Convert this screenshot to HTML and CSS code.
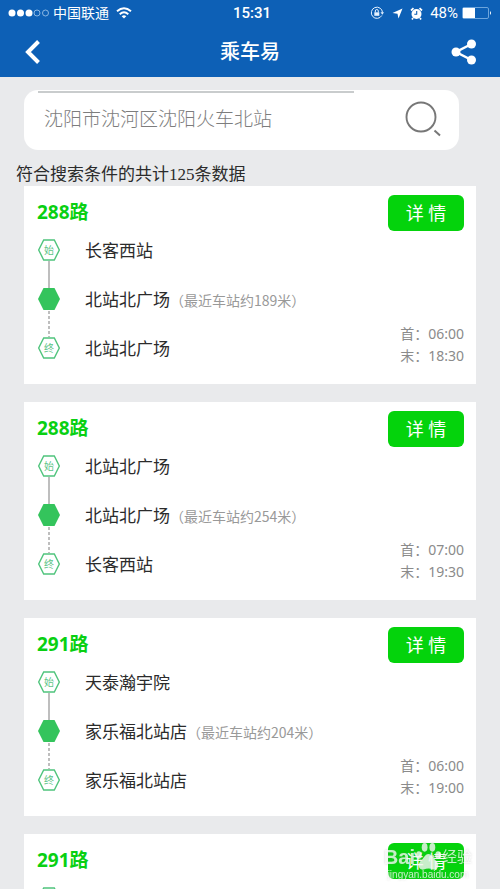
FILE: index.html
```html
<!DOCTYPE html>
<html lang="zh-CN">
<head>
<meta charset="utf-8">
<meta name="viewport" content="width=device-width, initial-scale=1">
<title>乘车易</title>
<link rel="stylesheet" href="styles.css">
</head>
<body>
<header class="top">
  <div class="status">
    <div class="status-side">
      <svg width="42" height="10" viewBox="0 0 42 10" aria-hidden="true">
        <g fill="#fff"><circle cx="4" cy="5" r="3.500"/><circle cx="12.500" cy="5" r="3.500"/><circle cx="21" cy="5" r="3.500"/></g>
        <g fill="none" stroke="#a9cdee" stroke-width=".8"><circle cx="29" cy="5" r="3"/><circle cx="37.500" cy="5" r="3"/></g>
      </svg>
      <span class="carrier">中国联通</span>
      <svg width="16" height="12" viewBox="0 0 16 12" fill="none" stroke="#fff" stroke-width="1.900" aria-hidden="true">
        <path d="M1 4.300Q8-2 15 4.300M3.700 7.200Q8 3.300 12.300 7.200"/><path d="M8 11.500L5.700 9.200Q8 7.200 10.300 9.200Z" fill="#fff" stroke="none"/>
      </svg>
    </div>
    <span class="clock">15:31</span>
    <div class="status-side status-right">
      <svg width="14" height="14" viewBox="0 0 14 14" fill="none" stroke="#e4f1ff" aria-hidden="true">
        <path d="M11.800 9.500A5.600 5.600 0 1 1 12.500 6.500"/><path d="M10.500 6.300H14L12.300 8.800Z" fill="#e4f1ff" stroke="none"/><path d="M4.300 6.300H9.300V9.800H4.300Z" fill="#e4f1ff" stroke="none"/><path d="M5.300 6.500V5a1.500 1.500 0 0 1 3 0V6.500"/>
      </svg>
      <svg class="arrow" width="11" height="11" viewBox="0 0 11 11" aria-hidden="true"><path d="M10.500.5L6.500 10.500L5.500 5.700L.5 5Z" fill="#fff"/></svg>
      <svg class="alarm" width="13" height="13" viewBox="0 0 13 13" aria-hidden="true">
        <circle cx="6.500" cy="7" r="5" fill="#fff"/><path d="M1 3.500L3.500 1.200M12 3.500L9.500 1.200M3 11L2 12.500M10 11L11 12.500" stroke="#fff" stroke-width="1.700"/><path d="M6.700 4V7.300H4.300" fill="none" stroke="#0d60b6" stroke-width="1.100"/>
      </svg>
      <span class="percent">48%</span>
      <svg width="30" height="12" viewBox="0 0 30 12" aria-hidden="true">
        <rect x=".5" y=".5" width="26" height="11" rx="1.500" fill="none" stroke="#6da5dc"/><path d="M1 1H13V11H1Z" fill="#fff"/><path d="M28 4Q30 6 28 8Z" fill="#fff"/>
      </svg>
    </div>
  </div>
  <nav class="bar">
    <button class="icon-button" type="button" aria-label="返回"><svg width="18" height="24" viewBox="0 0 18 24"><path d="M15.500 1.500L5 12L15.500 22.500" fill="none" stroke="#fff" stroke-width="4"/></svg></button>
    <h1>乘车易</h1>
    <button class="icon-button" type="button" aria-label="分享"><svg width="26" height="26" viewBox="0 0 26 26" fill="#fff"><path d="M20.500 5L5 13L20.500 21" fill="none" stroke="#fff" stroke-width="2.500"/><circle cx="5" cy="13" r="4.500"/><circle cx="20.500" cy="5" r="4.500"/><circle cx="20.500" cy="21" r="4.500"/></svg></button>
  </nav>
</header>
<main>
  <form class="search">
    <input type="text" aria-label="搜索站点" placeholder="沈阳市沈河区沈阳火车北站">
    <button type="button" aria-label="搜索"><svg width="38" height="38" viewBox="0 0 38 38" fill="none" stroke="#777"><circle cx="17" cy="17" r="14.500" stroke-width="1.900"/><path d="M30.500 30.500L36 35.500" stroke-width="2"/></svg></button>
  </form>
  <p class="summary">符合搜索条件的共计125条数据</p>
  <section class="routes">
    <article class="card">
      <div class="card-head"><h2>288路</h2><button class="detail" type="button">详 情</button></div>
      <div class="card-body">
        <svg class="track" width="24" height="122" viewBox="0 0 24 122" aria-hidden="true">
          <path class="rail" d="M12 23V50"/><path class="rail dashed" d="M12 73V99"/>
          <path class="hex" d="M6.700 2H17.300L22.300 12L17.300 22H6.700L1.700 12Z"/><path class="hex-solid" d="M6.500 50H17.500L23 61L17.500 72H6.500L1 61Z"/><path class="hex" d="M6.700 100H17.300L22.300 110L17.300 120H6.700L1.700 110Z"/>
          <text x="12" y="16">始</text><text x="12" y="114">终</text>
        </svg>
        <ol class="stops"><li>长客西站</li><li>北站北广场<small>（最近车站约189米）</small></li><li>北站北广场</li></ol>
        <div class="times"><span>首：06:00</span><span>末：18:30</span></div>
      </div>
    </article>
    <article class="card">
      <div class="card-head"><h2>288路</h2><button class="detail" type="button">详 情</button></div>
      <div class="card-body">
        <svg class="track" width="24" height="122" viewBox="0 0 24 122" aria-hidden="true">
          <path class="rail" d="M12 23V50"/><path class="rail dashed" d="M12 73V99"/>
          <path class="hex" d="M6.700 2H17.300L22.300 12L17.300 22H6.700L1.700 12Z"/><path class="hex-solid" d="M6.500 50H17.500L23 61L17.500 72H6.500L1 61Z"/><path class="hex" d="M6.700 100H17.300L22.300 110L17.300 120H6.700L1.700 110Z"/>
          <text x="12" y="16">始</text><text x="12" y="114">终</text>
        </svg>
        <ol class="stops"><li>北站北广场</li><li>北站北广场<small>（最近车站约254米）</small></li><li>长客西站</li></ol>
        <div class="times"><span>首：07:00</span><span>末：19:30</span></div>
      </div>
    </article>
    <article class="card">
      <div class="card-head"><h2>291路</h2><button class="detail" type="button">详 情</button></div>
      <div class="card-body">
        <svg class="track" width="24" height="122" viewBox="0 0 24 122" aria-hidden="true">
          <path class="rail" d="M12 23V50"/><path class="rail dashed" d="M12 73V99"/>
          <path class="hex" d="M6.700 2H17.300L22.300 12L17.300 22H6.700L1.700 12Z"/><path class="hex-solid" d="M6.500 50H17.500L23 61L17.500 72H6.500L1 61Z"/><path class="hex" d="M6.700 100H17.300L22.300 110L17.300 120H6.700L1.700 110Z"/>
          <text x="12" y="16">始</text><text x="12" y="114">终</text>
        </svg>
        <ol class="stops"><li>天泰瀚宇院</li><li>家乐福北站店<small>（最近车站约204米）</small></li><li>家乐福北站店</li></ol>
        <div class="times"><span>首：06:00</span><span>末：19:00</span></div>
      </div>
    </article>
    <article class="card">
      <div class="card-head"><h2>291路</h2><button class="detail" type="button">详 情</button></div>
      <div class="card-body">
        <svg class="track" width="24" height="122" viewBox="0 0 24 122" aria-hidden="true">
          <path class="hex" d="M6.700 2H17.300L22.300 12L17.300 22H6.700L1.700 12Z"/>
        </svg>
      </div>
    </article>
  </section>
</main>
<div class="watermark" aria-hidden="true">
  <div class="brand"><span>Bai</span><svg width="27" height="30" viewBox="0 0 28 30" fill="currentColor"><ellipse cx="10" cy="5" rx="3" ry="4.500"/><ellipse cx="18" cy="5" rx="3" ry="4.500"/><ellipse cx="4" cy="13" rx="3" ry="4"/><ellipse cx="24" cy="13" rx="3" ry="4"/><path d="M14 12C10 12 9 17 6 19C2 23 4 29 9 28Q14 26 19 28C24 29 26 23 22 19C19 17 18 12 14 12Z"/></svg><span class="brand-cn">经验</span></div>
  <div class="domain">jingyan.baidu.com</div>
</div>
</body>
</html>
```
FILE: styles.css
```css
* { box-sizing: border-box; }

body {
  margin: 0;
  height: 100vh;
  position: relative;
  display: flex;
  flex-direction: column;
  overflow: hidden;
  background: #e9eaec;
  color: #2b2b2b;
  font-family: "Noto Sans", "Noto Sans CJK SC", sans-serif;
}

button, input { font: inherit; border: 0; padding: 0; background: none; color: inherit; }
svg { display: block; flex: none; }
h1, h2, p, ol { margin: 0; padding: 0; }

.top { flex: none; background: #0d60b6; color: #fff; }

.status {
  display: grid;
  grid-template-columns: 1fr auto 1fr;
  align-items: center;
  height: 26px;
  padding: 0 8px;
  font-family: Roboto, "Noto Sans CJK SC", sans-serif;
  font-size: 14px;
  line-height: 20px;
}
.status-side { display: flex; align-items: center; }
.carrier { margin: 0 7px 0 3px; }
.clock { font-weight: 500; font-size: 15px; margin-left: 4px; }
.status-right { justify-content: flex-end; }
.arrow { margin-left: 8px; }
.alarm { margin-left: 7px; }
.percent { margin: 0 4px 0 7px; font-size: 15px; }

.bar {
  display: flex;
  align-items: center;
  justify-content: space-between;
  height: 51px;
  padding: 0 23px;
}
.bar h1 { font-size: 20px; font-weight: 500; line-height: 30px; }
.icon-button { width: 26px; display: flex; }

main { flex: 1; min-height: 0; overflow: hidden; padding: 13px 24px 0; }

.search {
  display: flex;
  align-items: center;
  height: 60px;
  margin-right: 17px;
  padding: 0 17px 2px 20px;
  border-radius: 14px;
  background:
    linear-gradient(#c9cccd, #c9cccd) 14px 1px / 316px 2px no-repeat,
    #fff;
}
.search input { flex: 1; min-width: 0; height: 40px; font-size: 19px; font-weight: 300; outline: 0; }
.search input::placeholder { color: #7d7d7d; opacity: 1; }

.summary {
  margin: 12px 0 0 -8px;
  padding-top: 1px;
  height: 24px;
  font-family: "Liberation Serif", "Noto Sans CJK SC", serif;
  font-size: 17px;
  line-height: 24px;
}

.routes { display: flex; flex-direction: column; gap: 18px; }
.card { height: 198px; padding: 9px 12px 0 13px; background: #fff; }
.card-head { display: flex; align-items: center; justify-content: space-between; height: 36px; }
.card h2 { padding-bottom: 2px; color: #09d012; font-size: 19px; line-height: 26px; font-weight: 700; }
.detail {
  width: 76px;
  height: 36px;
  padding-bottom: 2px;
  border-radius: 6px;
  background: #04d30c;
  color: #fff;
  font-size: 18px;
}
.card-body { display: flex; margin-top: 7px; }
.track text { font-family: "Noto Sans CJK SC", sans-serif; font-size: 10px; text-anchor: middle; fill: #5cc486; }
.rail { stroke: #a9a9a9; stroke-width: 1.5; }
.dashed { stroke-dasharray: 3 2; }
.hex { fill: #fff; stroke: #4fc47c; stroke-width: 1.4; }
.hex-solid { fill: #34c45c; }
.stops { flex: 1; margin-left: 24px; list-style: none; font-size: 17px; }
.stops li { height: 49px; line-height: 26px; white-space: nowrap; }
.stops small { font-family: "Noto Sans CJK SC", sans-serif; font-size: 14px; color: #999; }
.times {
  display: flex;
  flex-direction: column;
  align-self: flex-end;
  flex: none;
  margin-bottom: 18px;
  color: #8b8b8b;
  font-size: 14px;
  line-height: 22px;
}

.watermark {
  position: absolute;
  right: 28px;
  bottom: 7px;
  color: rgba(255, 255, 255, .75);
  font-family: "Liberation Sans", "Noto Sans CJK SC", sans-serif;
  filter: drop-shadow(0 0 1px rgba(120, 120, 120, .4));
}
.brand { display: flex; align-items: center; font-size: 20px; font-weight: 700; line-height: 28px; }
.brand-cn { font-size: 15px; font-weight: 400; }
.domain { margin-top: -4px; font-size: 10px; line-height: 14px; text-align: center; }
```
